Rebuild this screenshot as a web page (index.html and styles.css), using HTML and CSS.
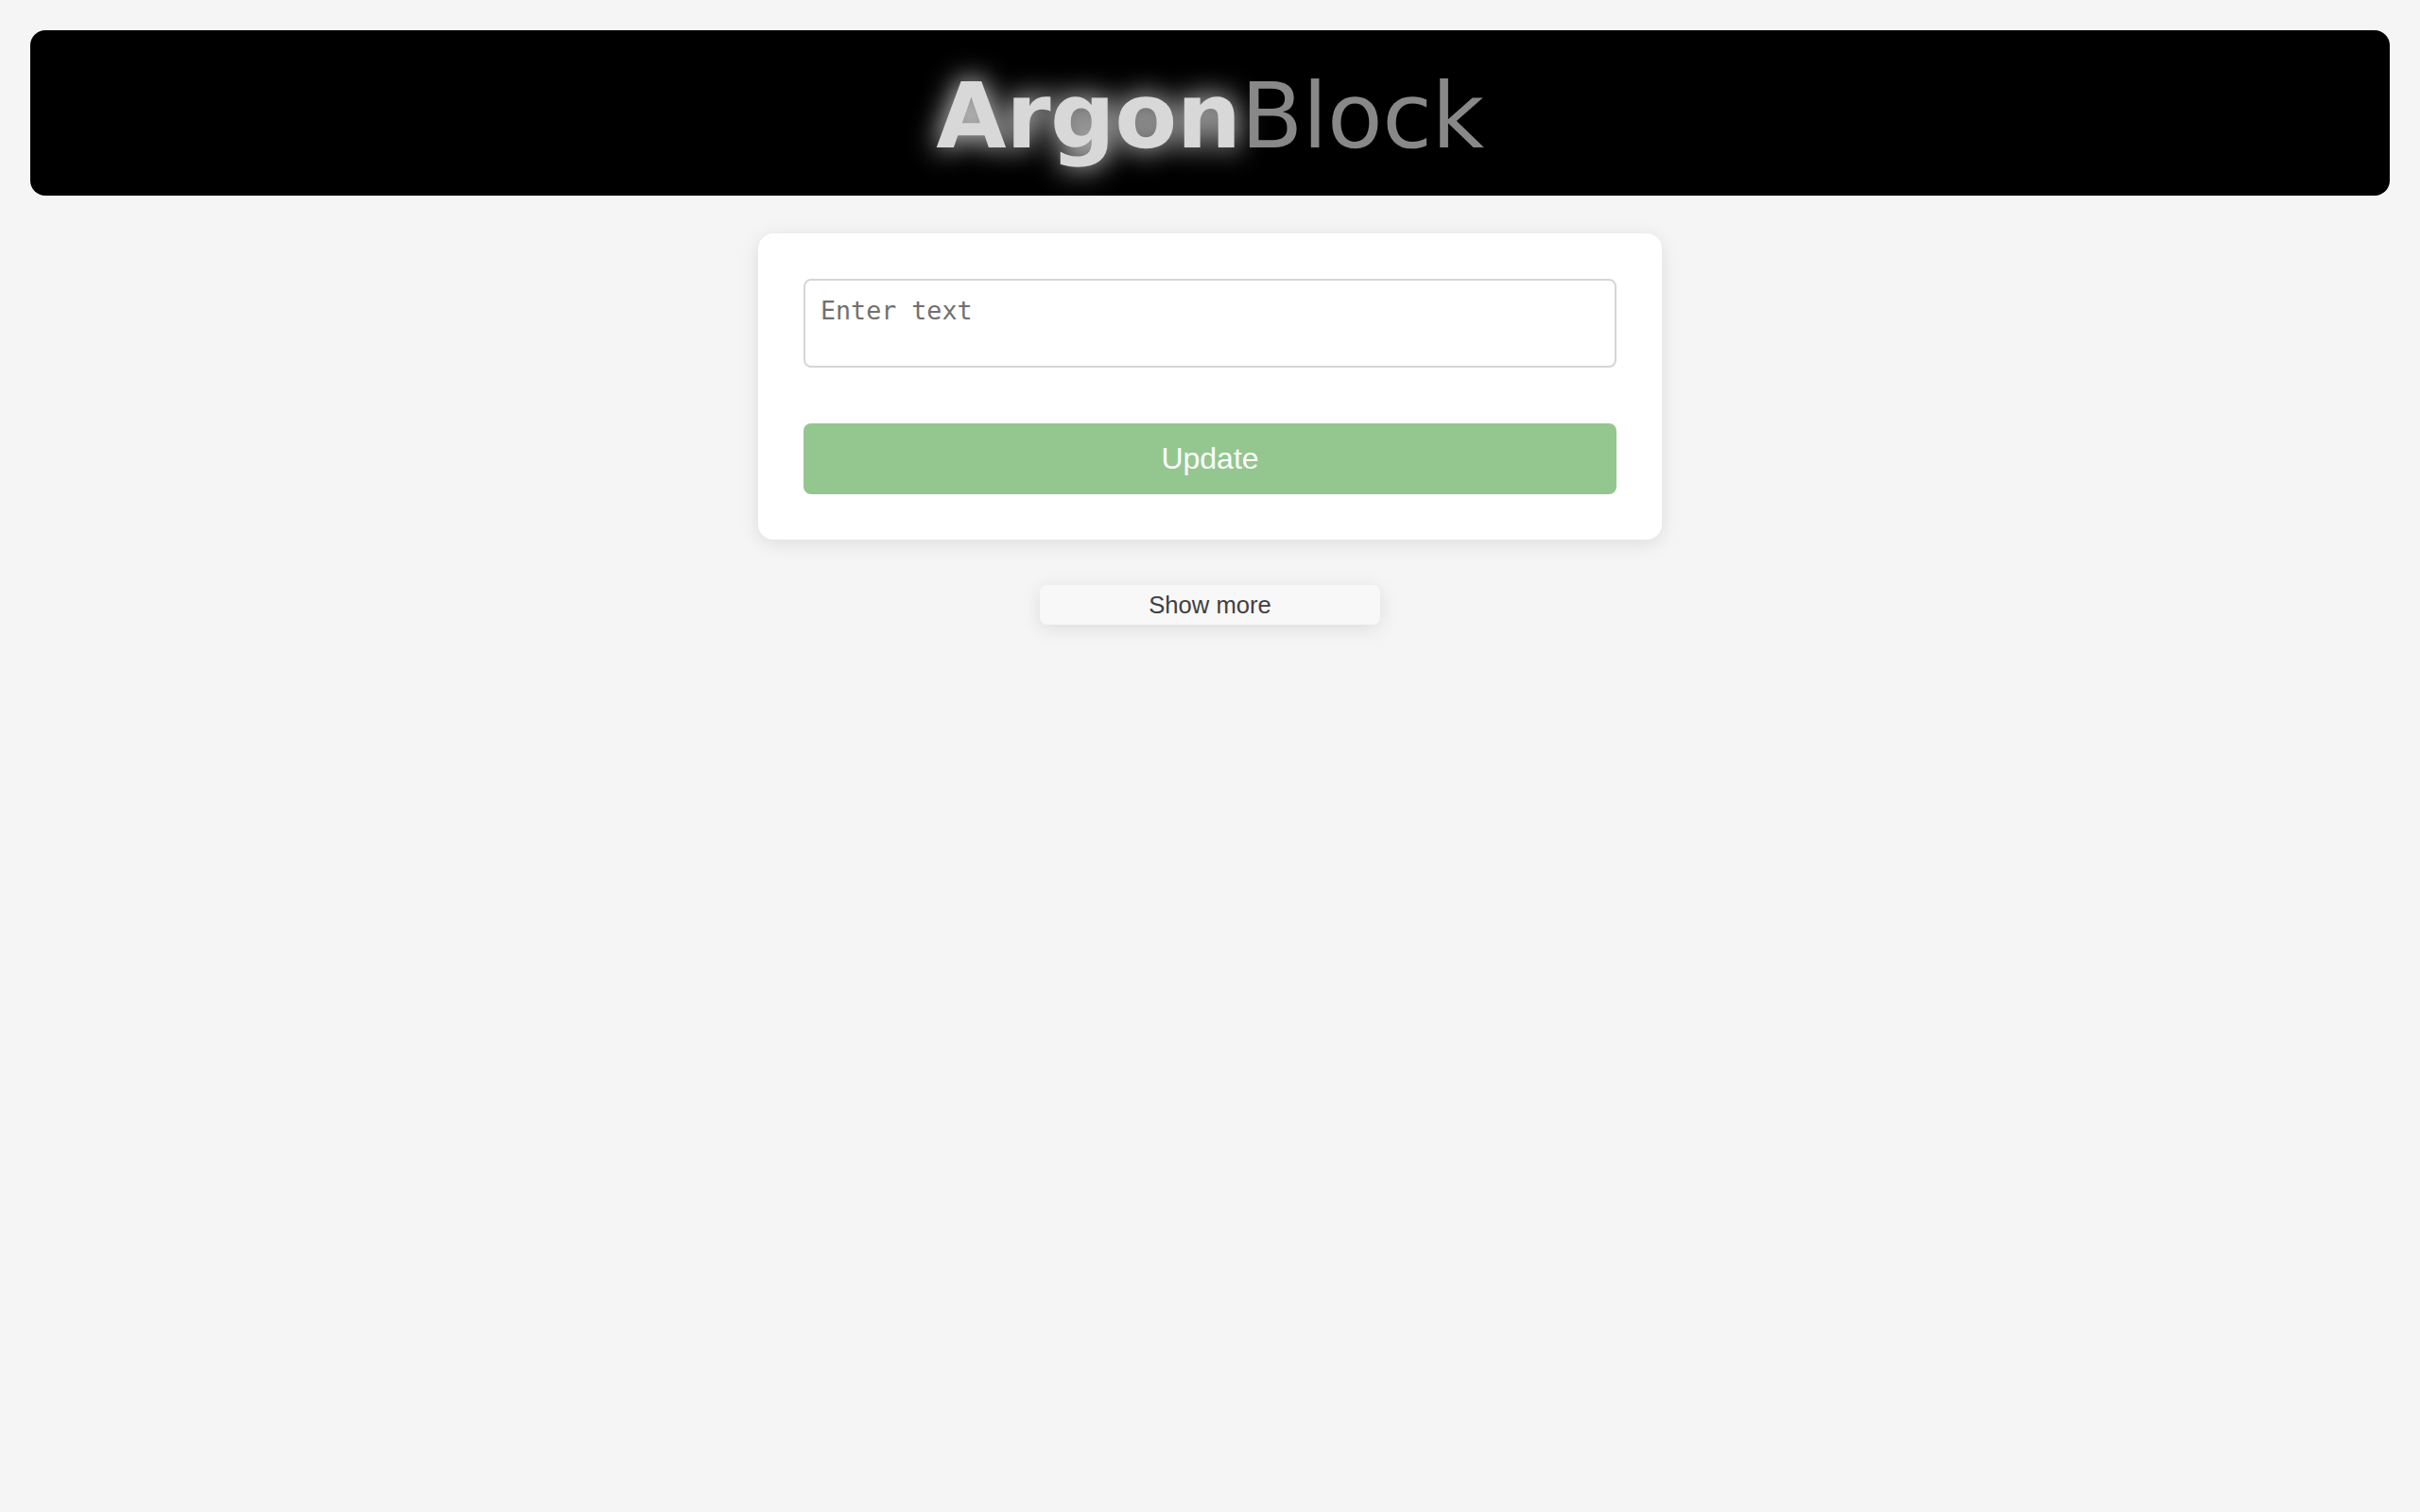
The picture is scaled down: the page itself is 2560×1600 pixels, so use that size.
FILE: index.html
```html
<!DOCTYPE html>
<html lang="en">
<head>
    <meta charset="UTF-8">
    <meta name="viewport" content="width=device-width, initial-scale=1.0">
    <title>ArgonBlock</title>
    <link rel="stylesheet" href="styles.css">
</head>
<body>
    <header class="banner">
        <h1 class="logo"><span class="logo-bold">Argon</span><span class="logo-light">Block</span></h1>
    </header>
    <main class="content">
        <div class="card">
            <textarea class="text-input" placeholder="Enter text"></textarea>
            <button class="update-btn">Update</button>
        </div>
        <button class="more-btn">Show more</button>
    </main>
</body>
</html>
```

FILE: styles.css
```css
* {
  box-sizing: border-box;
}

html, body {
  height: 100%;
}

body {
  margin: 0;
  padding: 32px;
  background-color: #f5f5f5;
  font-family: "Liberation Sans", Arial, sans-serif;
  text-rendering: geometricPrecision;
}

.banner {
  height: 175px;
  padding-top: 21px;
  background-color: #000;
  border-radius: 16px;
  text-align: center;
}

.logo {
  margin: 0;
  font-family: "DejaVu Sans", Verdana, sans-serif;
  font-size: 96px;
  font-weight: normal;
  letter-spacing: -0.5px;
  line-height: 140px;
}

.logo-bold {
  font-weight: bold;
  color: #d8d8d8;
  text-shadow: 0 0 30px #fff;
}

.logo-light {
  color: #888;
}

.content {
  display: flex;
  flex-direction: column;
  align-items: center;
  margin-top: 40px;
}

.card {
  display: flex;
  flex-direction: column;
  width: 956px;
  padding: 48px;
  background-color: #fff;
  border-radius: 16px;
  box-shadow: 0 4px 20px rgba(0, 0, 0, 0.1);
}

.text-input {
  display: block;
  width: 100%;
  height: 94px;
  padding: 16px;
  border: 2px solid #d6d6d6;
  border-radius: 8px;
  background-color: #fff;
  font-family: "DejaVu Sans Mono", monospace;
  font-size: 26.67px;
  resize: none;
}

/* opacity keeps the placeholder antialiased in grey */
.text-input::placeholder {
  color: #6f6f6f;
  opacity: 0.99;
}

.update-btn {
  height: 75px;
  margin-top: 59px;
  border: none;
  border-radius: 8px;
  background-color: #94c68f;
  color: #fff;
  font-family: inherit;
  font-size: 32px;
}

.more-btn {
  width: 360px;
  height: 42px;
  margin-top: 48px;
  padding: 0;
  border: none;
  border-radius: 8px;
  background-color: #f8f8f8;
  color: #404040;
  font-family: inherit;
  font-size: 25.6px;
  box-shadow: 0 4px 20px rgba(0, 0, 0, 0.1);
}
```
